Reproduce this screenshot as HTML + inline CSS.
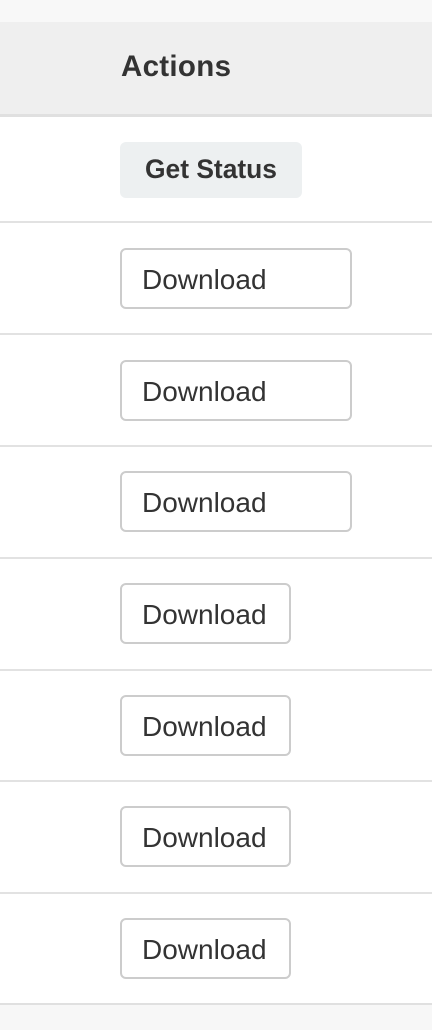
<!DOCTYPE html>
<html><head><style>
body{margin:0;width:432px;height:1030px;background:#fff;position:relative;overflow:hidden;font-family:"Liberation Sans",Arial,sans-serif;color:#333}
.a{position:absolute}
.line{position:absolute;left:0;width:432px;height:2px;background:#e2e2e2}
.btn{position:absolute;left:120px;border:2px solid #ccc;border-radius:6px;box-sizing:border-box;font-size:28px;line-height:59px;padding-left:20px;color:#333;background:#fff;height:61px}
</style></head><body>
<div class="a" style="left:0;top:0;width:432px;height:22px;background:#f8f8f8"></div>
<div class="a" style="left:0;top:22px;width:432px;height:92px;background:#efefef"></div>
<div class="a" style="left:0;top:114px;width:432px;height:3px;background:#e0e0e0"></div>
<div class="a" style="left:121px;top:50px;font-size:29.5px;font-weight:bold;color:#333;letter-spacing:0.3px">Actions</div>
<div class="a" style="left:120px;top:142px;width:182px;height:56px;background:#edf0f1;border-radius:6px;font-size:26.4px;font-weight:bold;line-height:55px;text-align:center">Get Status</div>
<div class="line" style="top:221px"></div>
<div class="btn" style="top:248px;width:232px">Download</div>
<div class="line" style="top:333px"></div>
<div class="btn" style="top:360px;width:232px">Download</div>
<div class="line" style="top:445px"></div>
<div class="btn" style="top:471px;width:232px">Download</div>
<div class="line" style="top:557px"></div>
<div class="btn" style="top:583px;width:171px">Download</div>
<div class="line" style="top:669px"></div>
<div class="btn" style="top:695px;width:171px">Download</div>
<div class="line" style="top:780px"></div>
<div class="btn" style="top:806px;width:171px">Download</div>
<div class="line" style="top:892px"></div>
<div class="btn" style="top:918px;width:171px">Download</div>
<div class="a" style="left:0;top:1003px;width:432px;height:2px;background:#e0e0e0"></div>
<div class="a" style="left:0;top:1005px;width:432px;height:25px;background:#f7f7f7"></div>
</body></html>
